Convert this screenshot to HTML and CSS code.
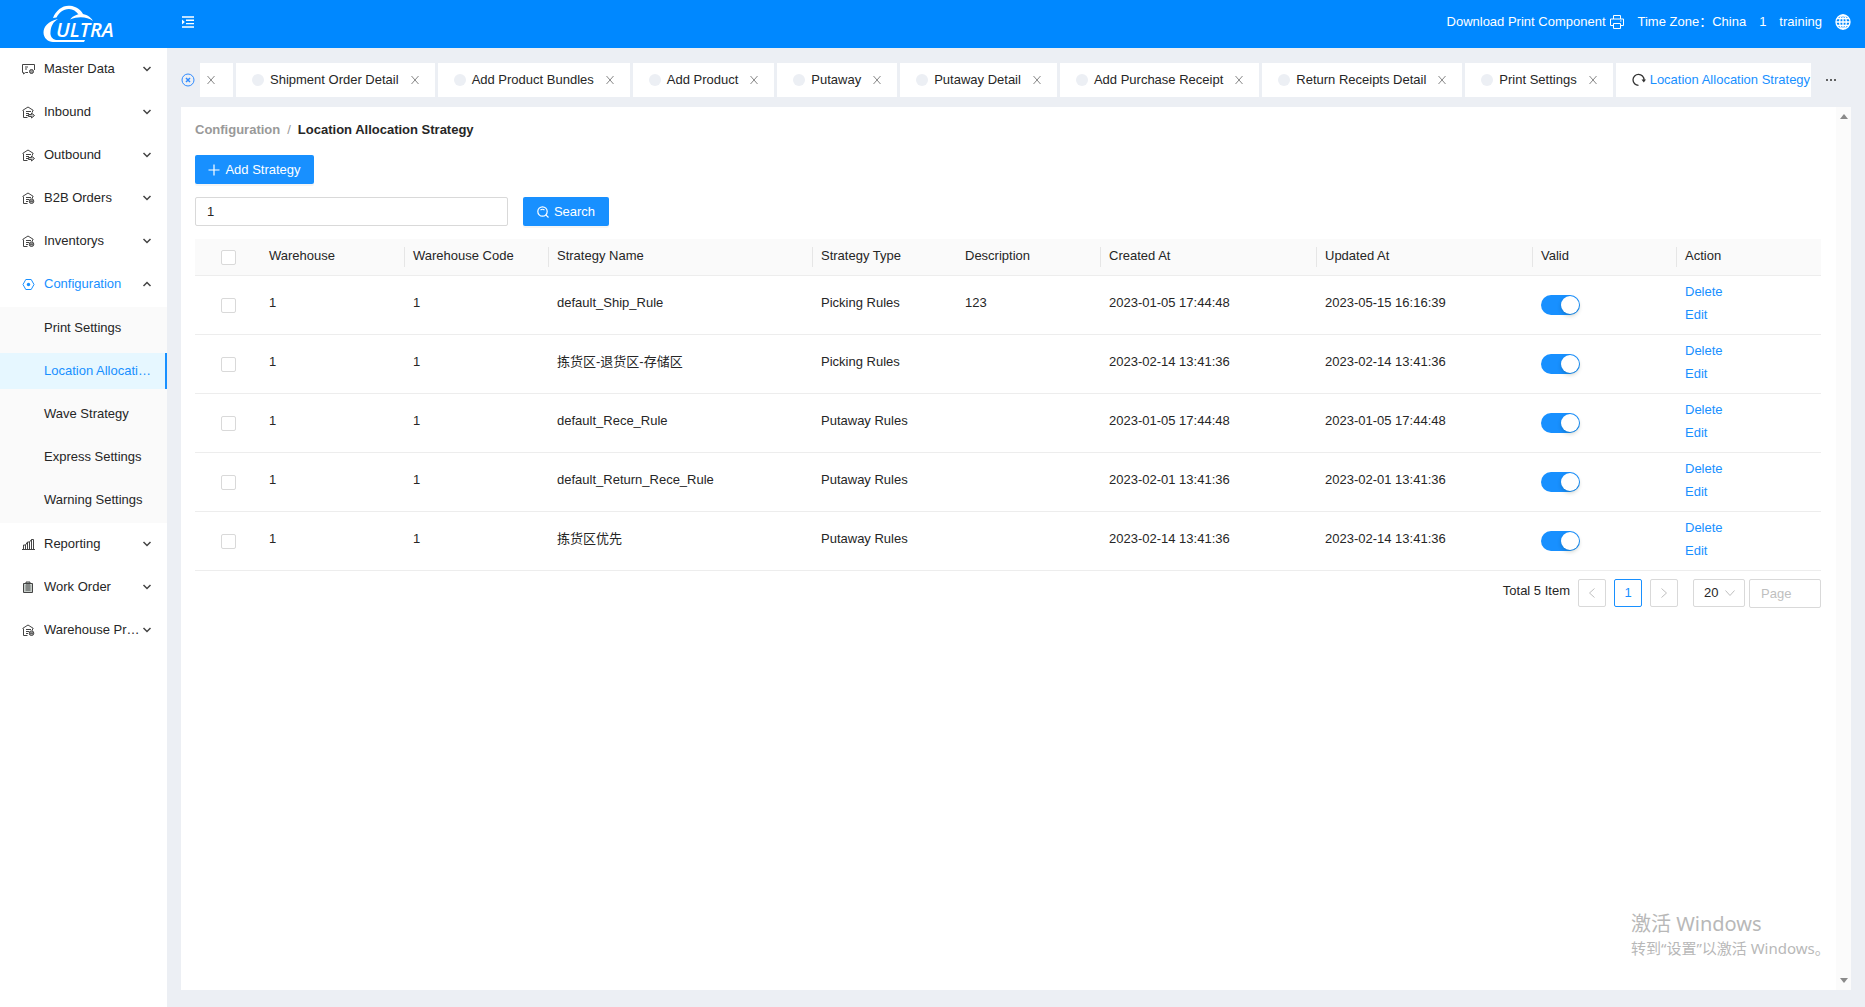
FILE: index.html
```html
<!DOCTYPE html>
<html lang="en">
<head>
<meta charset="utf-8">
<title>Location Allocation Strategy</title>
<link rel="stylesheet" href="styles.css">
</head>
<body>
<svg class="sprite" aria-hidden="true">
  <symbol id="down" viewBox="0 0 10 10"><path d="M1.500 3 5 6.500 8.500 3" fill="none" stroke="currentColor" stroke-width="1.500"/></symbol>
  <symbol id="up" viewBox="0 0 10 10"><path d="M1.500 7 5 3.500 8.500 7" fill="none" stroke="currentColor" stroke-width="1.500"/></symbol>
  <symbol id="warehouse" viewBox="0 0 13 13"><g fill="none" stroke="currentColor"><path d="M.5 4.500 6 1 11.500 4.500M1.500 4.500v7h4M4 5.500h5M4 7.500h3M4 9.500h2M10.500 4.500v2"/><circle cx="9.500" cy="9.200" r="2.300" fill="#aaa"/><path d="M8 9.200h3"/></g></symbol>
  <symbol id="inout" viewBox="0 0 13 13"><g fill="none" stroke="currentColor"><path d="M.5 4.500 6 1 11.500 4.500M1.500 4.500v7h4M4 5.500h5M4 7.500h3M4 9.500h2M10.500 4.500v2"/><path d="M6.500 8.500h3V7l3 2.500-3 2.500v-1.500h-3z" fill="#ccc"/></g></symbol>
  <symbol id="data" viewBox="0 0 13 13"><g fill="none" stroke="currentColor"><path d="M6 9.500H3.500L1.500 11V9.500H.5v-8h12V7M3 4h3M3 6h2"/><circle cx="9.500" cy="8.500" r="2" fill="#999"/></g></symbol>
  <symbol id="config" viewBox="0 0 13 13"><path d="M3.800 1.500h5.400L12 6.500l-2.800 5H3.800L1 6.500z" fill="none" stroke="currentColor" stroke-linejoin="round"/><circle cx="6.500" cy="6.500" r="1.700" fill="currentColor"/></symbol>
  <symbol id="chart" viewBox="0 0 13 13"><path d="M0 11.500h13M1.500 11V7h2v4M5.500 11V4h2v7M9.500 11V1.500h2V11M3.500 7l2-3M7.500 4l2-2.500" fill="none" stroke="currentColor"/></symbol>
  <symbol id="clipboard" viewBox="0 0 13 13"><path d="M1.500 2.500h9v9h-9zM4 1h4v2H4z" fill="#c5ccc8" stroke="currentColor"/><path d="M3.500 5h5M3.500 7h5M3.500 9h5" stroke="currentColor"/></symbol>
  <symbol id="x" viewBox="0 0 10 10"><path d="M1.500 1 8.500 9M8.500 1 1.500 9" stroke="currentColor" stroke-width="1"/></symbol>
</svg>

<header class="topbar">
  <a class="logo" href="#" aria-label="Ultra">
    <svg width="73" height="39" viewBox="0 0 73 39" fill="#fff">
      <path d="M15 14C5 16 .500 22 .500 27.500.500 33 5 37 10 37h31l1-2H13c-4-1-6-4-5.500-8C8 21 10 17 15 14z"/>
      <path d="M10 13C13 5 20 0 27 .800c6 .500 11 4 13 8.200l-4 1C33 6 30 4 26 4c-6 0-10 4-12.500 8.500z"/>
      <path d="M27 14.500C33 7 45 7 50 16c-6-4-14-5-23-1.500z"/>
      <text x="13" y="32" class="logo-text">ULTRA</text>
    </svg>
  </a>
  <button class="icon-button" aria-label="Toggle menu">
    <svg width="12" height="12" viewBox="0 0 12 12"><path d="M0 1h12M4 4.300h8M4 7.600h8M0 11h12" stroke="#fff" stroke-width="1.400"/><path d="M0 3.500 2.800 6 0 8.500z" fill="#fff"/></svg>
  </button>
  <nav class="topbar-links">
    <a class="download" href="#">Download Print Component
      <svg width="16" height="16" viewBox="0 0 16 16" fill="none" stroke="#fff"><path d="M4.500 5V1.500h7V5M4.500 11.500h-3V5h13v6.500h-3M4.500 9.500h7v5h-7zM11 7h1.500"/></svg>
    </a>
    <span class="zone">Time Zone：<a href="#">China</a></span>
    <a href="#">1</a>
    <a href="#">training</a>
    <button class="icon-button" aria-label="Language">
      <svg width="16" height="16" viewBox="0 0 16 16" fill="none" stroke="#fff" stroke-width="1.300"><circle cx="8" cy="8" r="7"/><ellipse cx="8" cy="8" rx="3.300" ry="7"/><path d="M8 1v14M1 8h14M2 4.500h12M2 11.500h12"/></svg>
    </button>
  </nav>
</header>

<div class="shell">
  <nav class="sidebar">
    <a class="menu-item" href="#"><svg class="menu-icon"><use href="#data"/></svg><span>Master Data</span><svg class="arrow"><use href="#down"/></svg></a>
    <a class="menu-item" href="#"><svg class="menu-icon"><use href="#inout"/></svg><span>Inbound</span><svg class="arrow"><use href="#down"/></svg></a>
    <a class="menu-item" href="#"><svg class="menu-icon"><use href="#inout"/></svg><span>Outbound</span><svg class="arrow"><use href="#down"/></svg></a>
    <a class="menu-item" href="#"><svg class="menu-icon"><use href="#warehouse"/></svg><span>B2B Orders</span><svg class="arrow"><use href="#down"/></svg></a>
    <a class="menu-item" href="#"><svg class="menu-icon"><use href="#warehouse"/></svg><span>Inventorys</span><svg class="arrow"><use href="#down"/></svg></a>
    <a class="menu-item open" href="#"><svg class="menu-icon"><use href="#config"/></svg><span>Configuration</span><svg class="arrow"><use href="#up"/></svg></a>
    <div class="submenu">
      <a class="sub-item" href="#">Print Settings</a>
      <a class="sub-item current" href="#">Location Allocation Strategy</a>
      <a class="sub-item" href="#">Wave Strategy</a>
      <a class="sub-item" href="#">Express Settings</a>
      <a class="sub-item" href="#">Warning Settings</a>
    </div>
    <a class="menu-item" href="#"><svg class="menu-icon"><use href="#chart"/></svg><span>Reporting</span><svg class="arrow"><use href="#down"/></svg></a>
    <a class="menu-item" href="#"><svg class="menu-icon"><use href="#clipboard"/></svg><span>Work Order</span><svg class="arrow"><use href="#down"/></svg></a>
    <a class="menu-item" href="#"><svg class="menu-icon"><use href="#warehouse"/></svg><span>Warehouse Process</span><svg class="arrow"><use href="#down"/></svg></a>
  </nav>

  <div class="workspace">
    <div class="tabbar">
      <button class="icon-button close-all" aria-label="Close all tabs">
        <svg width="14" height="14" viewBox="0 0 14 14" fill="none" stroke="#2f8bff"><circle cx="7" cy="7" r="6"/><path d="M5 5l4 4M9 5 5 9" stroke-width="1.500"/></svg>
      </button>
      <div class="tabs">
        <div class="tab cut"><button class="tab-close" aria-label="Close"><svg><use href="#x"/></svg></button></div>
        <div class="tab"><i class="dot"></i><a href="#">Shipment Order Detail</a><button class="tab-close" aria-label="Close"><svg><use href="#x"/></svg></button></div>
        <div class="tab"><i class="dot"></i><a href="#">Add Product Bundles</a><button class="tab-close" aria-label="Close"><svg><use href="#x"/></svg></button></div>
        <div class="tab"><i class="dot"></i><a href="#">Add Product</a><button class="tab-close" aria-label="Close"><svg><use href="#x"/></svg></button></div>
        <div class="tab"><i class="dot"></i><a href="#">Putaway</a><button class="tab-close" aria-label="Close"><svg><use href="#x"/></svg></button></div>
        <div class="tab"><i class="dot"></i><a href="#">Putaway Detail</a><button class="tab-close" aria-label="Close"><svg><use href="#x"/></svg></button></div>
        <div class="tab"><i class="dot"></i><a href="#">Add Purchase Receipt</a><button class="tab-close" aria-label="Close"><svg><use href="#x"/></svg></button></div>
        <div class="tab"><i class="dot"></i><a href="#">Return Receipts Detail</a><button class="tab-close" aria-label="Close"><svg><use href="#x"/></svg></button></div>
        <div class="tab"><i class="dot"></i><a href="#">Print Settings</a><button class="tab-close" aria-label="Close"><svg><use href="#x"/></svg></button></div>
        <div class="tab active"><svg class="reload" viewBox="0 0 14 14"><path d="M6.500 12.400A5.500 5.500 0 1 1 12 7" fill="none" stroke="#333" stroke-width="1.300"/><path d="M9.500 6.500H14L11.800 9.500z" fill="#333"/></svg><a href="#">Location Allocation Strategy</a></div>
      </div>
      <button class="icon-button more" aria-label="More tabs">
        <svg width="12" height="4" viewBox="0 0 12 4" fill="#333"><circle cx="2" cy="2" r="1"/><circle cx="6" cy="2" r="1"/><circle cx="10" cy="2" r="1"/></svg>
      </button>
    </div>

    <div class="panel">
      <main class="content">
        <nav class="breadcrumb"><a href="#">Configuration</a><span>/</span><b>Location Allocation Strategy</b></nav>
        <div class="actions"><button class="primary add"><svg width="12" height="12" viewBox="0 0 12 12"><path d="M6 .500v11M.500 6h11" stroke="#fff" stroke-width="1.200"/></svg>Add Strategy</button></div>
        <form class="search">
          <input class="field query" type="text" value="1" aria-label="Strategy name">
          <button class="primary find" type="button"><svg width="12" height="12" viewBox="0 0 12 12" fill="none" stroke="#fff" stroke-width="1.200"><circle cx="5.500" cy="5.500" r="4.700"/><path d="M8.800 8.800 11.500 11.500M3.500 4Q5.500 2.500 7.500 4"/></svg>Search</button>
        </form>

        <table class="grid">
          <colgroup><col class="c-check"><col class="c-s"><col class="c-s"><col><col class="c-s"><col class="c-s"><col class="c-l"><col class="c-l"><col class="c-s"><col class="c-s"></colgroup>
          <thead>
            <tr><th class="pick"><input class="check" type="checkbox" aria-label="Select all"></th><th class="rule">Warehouse</th><th class="rule">Warehouse Code</th><th class="rule">Strategy Name</th><th>Strategy Type</th><th class="rule">Description</th><th class="rule">Created At</th><th class="rule">Updated At</th><th class="rule">Valid</th><th>Action</th></tr>
          </thead>
          <tbody>
            <tr><td class="pick"><input class="check" type="checkbox" aria-label="Select row 1"></td><td>1</td><td>1</td><td>default_Ship_Rule</td><td>Picking Rules</td><td>123</td><td>2023-01-05 17:44:48</td><td>2023-05-15 16:16:39</td><td class="toggle"><input class="switch" type="checkbox" role="switch" aria-label="Valid" checked></td><td><a href="#">Delete</a><a href="#">Edit</a></td></tr>
            <tr><td class="pick"><input class="check" type="checkbox" aria-label="Select row 2"></td><td>1</td><td>1</td><td>拣货区-退货区-存储区</td><td>Picking Rules</td><td></td><td>2023-02-14 13:41:36</td><td>2023-02-14 13:41:36</td><td class="toggle"><input class="switch" type="checkbox" role="switch" aria-label="Valid" checked></td><td><a href="#">Delete</a><a href="#">Edit</a></td></tr>
            <tr><td class="pick"><input class="check" type="checkbox" aria-label="Select row 3"></td><td>1</td><td>1</td><td>default_Rece_Rule</td><td>Putaway Rules</td><td></td><td>2023-01-05 17:44:48</td><td>2023-01-05 17:44:48</td><td class="toggle"><input class="switch" type="checkbox" role="switch" aria-label="Valid" checked></td><td><a href="#">Delete</a><a href="#">Edit</a></td></tr>
            <tr><td class="pick"><input class="check" type="checkbox" aria-label="Select row 4"></td><td>1</td><td>1</td><td>default_Return_Rece_Rule</td><td>Putaway Rules</td><td></td><td>2023-02-01 13:41:36</td><td>2023-02-01 13:41:36</td><td class="toggle"><input class="switch" type="checkbox" role="switch" aria-label="Valid" checked></td><td><a href="#">Delete</a><a href="#">Edit</a></td></tr>
            <tr><td class="pick"><input class="check" type="checkbox" aria-label="Select row 5"></td><td>1</td><td>1</td><td>拣货区优先</td><td>Putaway Rules</td><td></td><td>2023-02-14 13:41:36</td><td>2023-02-14 13:41:36</td><td class="toggle"><input class="switch" type="checkbox" role="switch" aria-label="Valid" checked></td><td><a href="#">Delete</a><a href="#">Edit</a></td></tr>
          </tbody>
        </table>

        <div class="pager">
          <span>Total 5 Item</span>
          <button class="page" aria-label="Previous page" disabled><svg width="10" height="10" viewBox="0 0 10 10"><path d="M7.500.500 2.500 5l5 4.500" fill="none" stroke="currentColor"/></svg></button>
          <button class="page on">1</button>
          <button class="page" aria-label="Next page" disabled><svg width="10" height="10" viewBox="0 0 10 10"><path d="M2.500.500 7.500 5l-5 4.500" fill="none" stroke="currentColor"/></svg></button>
          <div class="sizes">
            <span class="size"><select class="field" aria-label="Rows per page"><option>20</option><option>50</option></select><svg width="10" height="10" viewBox="0 0 10 10"><path d="M.500 2.500 5 7.500l4.500-5" fill="none" stroke="currentColor"/></svg></span>
            <input class="field jump" type="text" placeholder="Page" aria-label="Page">
          </div>
        </div>
      </main>
      <div class="scrollbar" aria-hidden="true"><i class="to-top"></i><i class="to-end"></i></div>
    </div>
  </div>
</div>

<aside class="watermark"><p class="wm-title">激活 Windows</p><p class="wm-note">转到“设置”以激活 Windows。</p></aside>
</body>
</html>
```
FILE: styles.css
```css
* { box-sizing: border-box; }

body {
  margin: 0;
  height: 100vh;
  display: flex;
  flex-direction: column;
  overflow: hidden;
  background: #eceff4;
  color: #262626;
  font: 13px/20px "Liberation Sans", "Noto Sans CJK SC", sans-serif;
}

a { color: inherit; text-decoration: none; }
button, input, select { font: inherit; color: inherit; margin: 0; }
button { padding: 0; border: 0; background: none; cursor: pointer; }
.sprite { display: none; }
.icon-button { display: flex; align-items: center; }

/* Top bar */
.topbar {
  flex: none;
  display: flex;
  align-items: center;
  height: 48px;
  padding: 0 14px 4px 43px;
  background: #08f;
  color: #fff;
}
.logo { display: flex; width: 139px; padding-top: 4px; }
.logo-text { font: italic 600 20px "Open Sans", sans-serif; }
.topbar-links { display: flex; align-items: center; gap: 13px; margin-left: auto; }
.download { display: flex; align-items: center; gap: 3px; }

.shell { flex: 1; display: flex; min-height: 0; }

/* Side menu */
.sidebar { flex: none; width: 167px; padding-top: 3px; background: #fff; }
.menu-item {
  display: flex;
  align-items: center;
  height: 36px;
  margin-bottom: 7px;
  padding: 0 15px 0 22px;
}
.menu-item span {
  flex: 1;
  min-width: 0;
  overflow: hidden;
  text-overflow: ellipsis;
  white-space: nowrap;
}
.menu-icon { flex: none; width: 13px; height: 13px; margin-right: 9px; color: #444; }
.arrow { flex: none; width: 10px; height: 10px; color: #444; }
.open { margin-bottom: 5px; color: #1890ff; }
.open .menu-icon { color: #1890ff; }
.submenu {
  display: grid;
  gap: 7px;
  margin-bottom: 3px;
  padding: 3px 0 5px;
  background: #fafafa;
}
.sub-item {
  height: 36px;
  padding: 0 12px 0 44px;
  line-height: 36px;
  overflow: hidden;
  text-overflow: ellipsis;
  white-space: nowrap;
}
.current {
  background: #e6f7ff;
  color: #1890ff;
  border-right: 2px solid #1890ff;
}

/* Tabs */
.workspace {
  flex: 1;
  min-width: 0;
  display: flex;
  flex-direction: column;
  padding: 15px 14px 17px;
}
.tabbar { display: flex; align-items: center; height: 34px; margin-bottom: 10px; }
.close-all { width: 19px; }
.tabs { flex: 1; display: flex; gap: 3px; min-width: 0; overflow: hidden; }
.tab {
  flex: none;
  display: flex;
  align-items: center;
  height: 34px;
  padding: 0 15px 0 16px;
  background: #fff;
}
.cut { padding: 0 17px 0 6px; }
.cut .tab-close { margin-left: 0; }
.dot { width: 12px; height: 12px; margin-right: 6px; border-radius: 50%; background: #eceff4; }
.tab-close { display: flex; margin-left: 11px; color: #888; }
.tab-close svg { width: 10px; height: 10px; }
.active { color: #1890ff; }
.reload { width: 14px; height: 14px; margin-right: 4px; }
.more { flex: none; width: 40px; justify-content: center; }

/* Page panel */
.panel { flex: 1; display: flex; min-height: 0; background: #fff; }
.content { flex: 1; min-width: 0; padding: 13px 15px 0 14px; }
.scrollbar {
  flex: none;
  width: 15px;
  display: flex;
  flex-direction: column;
  justify-content: space-between;
  align-items: center;
  padding: 7px 0;
  background: #fbfbfb;
}
.to-top, .to-end { border: 4px solid transparent; border-top: 0; border-bottom: 5px solid #8a8a8a; }
.to-end { border-bottom: 0; border-top: 5px solid #8a8a8a; }

.breadcrumb { display: flex; gap: 7px; margin-bottom: 15px; color: #999; font-weight: bold; }
.breadcrumb span { font-weight: normal; }
.breadcrumb b { color: #262626; }

.primary {
  display: inline-flex;
  align-items: center;
  justify-content: center;
  gap: 5px;
  height: 29px;
  border-radius: 2px;
  background: #1890ff;
  box-shadow: 0 2px 0 rgba(0, 0, 0, .04);
  color: #fff;
}
.actions { display: flex; }
.add { width: 119px; }
.find { width: 86px; }
.search { display: flex; gap: 15px; margin: 13px 0; }
.field { height: 29px; padding: 0 11px; border: 1px solid #d9d9d9; border-radius: 2px; background: #fff; }
.query { width: 313px; }

/* Table */
.grid { width: 100%; table-layout: fixed; border-collapse: separate; border-spacing: 0; }
.c-check { width: 66px; }
.c-s { width: 144px; }
.c-l { width: 216px; }
.grid th, .grid td { padding: 4px 8px 8px; border-bottom: 1px solid #ededed; text-align: left; }
.grid th { height: 37px; padding: 0 8px 3px; background-color: #fafafa; font-weight: normal; }
.grid .rule {
  background-image: linear-gradient(#e6e6e6, #e6e6e6);
  background-position: right center;
  background-size: 1px 20px;
  background-repeat: no-repeat;
}
.grid .pick { padding: 0; text-align: center; }
.grid .toggle { padding: 0 8px; }
.grid a { display: block; width: max-content; line-height: 23px; color: #1890ff; }
.check, .switch { appearance: none; display: inline-block; vertical-align: middle; }
.check { width: 15px; height: 15px; border: 1px solid #d9d9d9; border-radius: 2px; background: #fff; }
.switch {
  display: flex;
  justify-content: flex-end;
  align-items: center;
  width: 39px;
  height: 20px;
  padding: 0 1px;
  border-radius: 10px;
  background: #1890ff;
}
.switch::before {
  content: "";
  width: 18px;
  height: 18px;
  border-radius: 50%;
  background: #fff;
  box-shadow: 0 2px 4px rgba(0, 35, 11, .2);
}

/* Pagination */
.pager { display: flex; justify-content: flex-end; gap: 8px; margin-top: 8px; }
.pager > span { line-height: 24px; }
.page {
  display: flex;
  align-items: center;
  justify-content: center;
  width: 28px;
  height: 28px;
  border: 1px solid #d9d9d9;
  border-radius: 2px;
  color: #bfbfbf;
}
.on { border-color: #1890ff; color: #1890ff; }
.sizes { display: flex; gap: 4px; margin-left: 7px; }
.size { position: relative; }
.size select { appearance: none; width: 52px; height: 28px; padding: 0 10px; }
.size svg { position: absolute; right: 10px; top: 9px; color: #bfbfbf; pointer-events: none; }
.jump { width: 72px; }
.jump::placeholder { color: #bfbfbf; }

/* System notice shown over the page */
.watermark {
  position: absolute;
  right: 38px;
  bottom: 47px;
  width: 196px;
  color: #b8b8b8;
  font-family: "Noto Sans", "Noto Sans CJK SC", sans-serif;
  white-space: nowrap;
  pointer-events: none;
}
.watermark p { margin: 0; }
.wm-title { font-size: 20px; line-height: 24px; }
.wm-note { font-size: 15px; line-height: 24px; }
```
